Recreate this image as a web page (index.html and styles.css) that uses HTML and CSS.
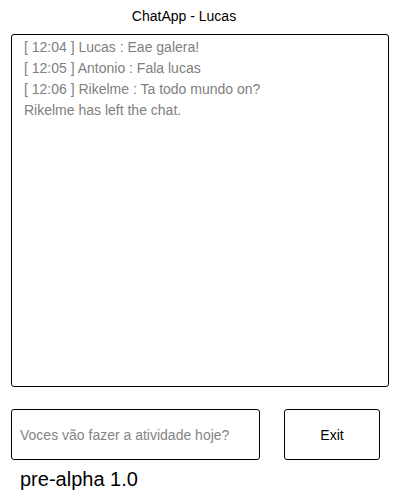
FILE: index.html
```html
<!DOCTYPE html>
<html>
<head>
<meta charset="utf-8">
<link rel="stylesheet" href="styles.css">
</head>
<body>
<div class="app">
  <h1 class="title">ChatApp - Lucas</h1>
  <div class="chat">
    <p class="msg">[ 12:04 ] Lucas : Eae galera!</p>
    <p class="msg">[ 12:05 ] Antonio : Fala lucas</p>
    <p class="msg">[ 12:06 ] Rikelme : Ta todo mundo on?</p>
    <p class="msg">Rikelme has left the chat.</p>
  </div>
  <div class="controls">
    <input class="input" type="text" placeholder="Voces vão fazer a atividade hoje?">
    <button class="exit">Exit</button>
  </div>
  <div class="version">pre-alpha 1.0</div>
</div>
</body>
</html>
```
FILE: styles.css
```css
* { box-sizing: border-box; }
html, body { margin: 0; padding: 0; background: #fff; }
body { font-family: "Liberation Sans", Arial, sans-serif; color: #000; }
.app { width: 400px; display: flex; flex-direction: column; }
.title {
  margin: 8px 0 0;
  padding-right: 32px;
  font-size: 14px;
  font-weight: normal;
  line-height: 16px;
  text-align: center;
}
.chat {
  margin: 10px 11px 0;
  height: 353px;
  border: 1px solid #000;
  border-radius: 3px;
  padding: 2px 12px;
}
.msg {
  margin: 0;
  font-size: 14px;
  line-height: 21px;
  color: #808080;
}
.controls {
  display: flex;
  margin: 22px 0 0 11px;
  gap: 24px;
}
.input {
  width: 249px;
  height: 51px;
  border: 1px solid #000;
  border-radius: 3px;
  padding: 0 8px;
  font-family: "Liberation Sans", Arial, sans-serif;
  font-size: 14px;
  outline: none;
}
.input::placeholder { color: #858585; }
.exit {
  width: 96px;
  height: 51px;
  border: 1px solid #000;
  border-radius: 3px;
  background: #fff;
  font-family: "Liberation Sans", Arial, sans-serif;
  font-size: 14px;
  color: #000;
  padding: 0;
}
.version {
  margin: 8px 0 0 20px;
  font-size: 20px;
  line-height: 23px;
}
```
